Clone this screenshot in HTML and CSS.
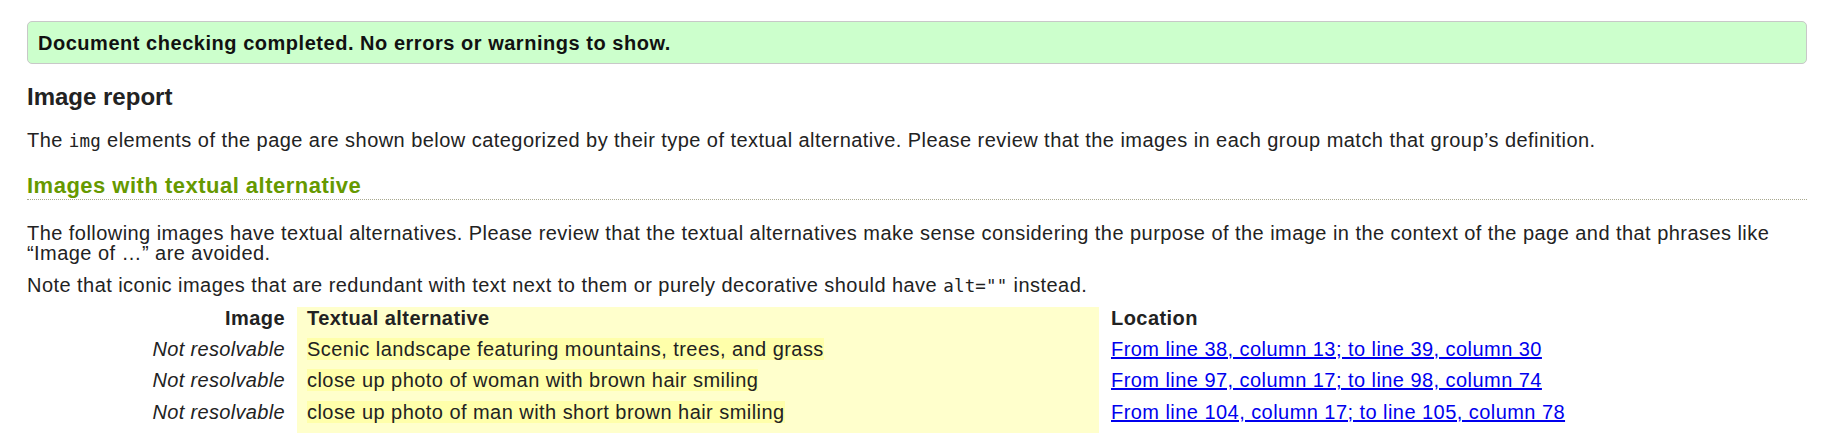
FILE: index.html
```html
<!DOCTYPE html>
<html lang="en">
<head>
<meta charset="utf-8">
<title>Image report</title>
<link rel="stylesheet" href="styles.css">
</head>
<body>
<div class="success">Document checking completed. No errors or warnings to show.</div>
<h2 class="report-title">Image report</h2>
<p class="intro">The <code>img</code> elements of the page are shown below categorized by their type of textual alternative. Please review that the images in each group match that group’s definition.</p>
<h3 class="group-title">Images with textual alternative</h3>
<p class="desc">The following images have textual alternatives. Please review that the textual alternatives make sense considering the purpose of the image in the context of the page and that phrases like “Image of …” are avoided.</p>
<p class="note">Note that iconic images that are redundant with text next to them or purely decorative should have <code>alt=""</code> instead.</p>
<table class="imagereview">
  <thead>
    <tr>
      <th class="img">Image</th>
      <th class="alt">Textual alternative</th>
      <th class="loc">Location</th>
    </tr>
  </thead>
  <tbody>
    <tr>
      <td class="img"><i>Not resolvable</i></td>
      <td class="alt"><span>Scenic landscape featuring mountains, trees, and grass</span></td>
      <td class="loc"><a href="#l38">From line 38, column 13; to line 39, column 30</a></td>
    </tr>
    <tr>
      <td class="img"><i>Not resolvable</i></td>
      <td class="alt"><span>close up photo of woman with brown hair smiling</span></td>
      <td class="loc"><a href="#l97">From line 97, column 17; to line 98, column 74</a></td>
    </tr>
    <tr class="last">
      <td class="img"><i>Not resolvable</i></td>
      <td class="alt"><span>close up photo of man with short brown hair smiling</span></td>
      <td class="loc"><a href="#l104">From line 104, column 17; to line 105, column 78</a></td>
    </tr>
  </tbody>
</table>
</body>
</html>
```
FILE: styles.css
```css
html {
  background: #fff;
}
body {
  margin: 0;
  padding: 21px 26px 0 27px;
  font-family: "Liberation Sans", Arial, sans-serif;
  font-size: 20px;
  line-height: 20px;
  letter-spacing: 0.45px;
  color: #222;
}
code {
  font-family: "DejaVu Sans Mono", monospace;
  font-size: 17.5px;
  letter-spacing: 0.2px;
}
.success {
  background: #ccffcc;
  border: 1px solid #c8c8c8;
  border-radius: 5px;
  padding: 11px 10px 9px;
  line-height: 21px;
  font-weight: bold;
  letter-spacing: 0.53px;
  color: #111;
}
.report-title {
  margin: 19px 0 0;
  font-size: 24px;
  line-height: 28px;
  font-weight: bold;
  letter-spacing: 0;
  color: #222;
}
.intro {
  margin: 19px 0 0;
}
.group-title {
  margin: 23px 0 0;
  font-size: 22px;
  line-height: 24px;
  font-weight: bold;
  letter-spacing: 0.49px;
  color: #669900;
  border-bottom: 1px dotted #a8a890;
  padding-bottom: 1px;
}
.desc {
  margin: 23px 0 0;
}
.note {
  margin: 12px 0 0;
}
.imagereview {
  margin: 11px 0 0 119px;
  border-collapse: collapse;
}
.imagereview th {
  font-weight: bold;
  text-align: left;
  padding-top: 1px;
  padding-bottom: 5px;
  color: #222;
  white-space: nowrap;
}
.imagereview td {
  padding-top: 5.5px;
  padding-bottom: 6px;
  white-space: nowrap;
}
.imagereview .last td {
  padding-bottom: 11px;
}
.imagereview .img {
  width: 139px;
  padding-left: 0;
  padding-right: 12px;
  text-align: right;
}
.imagereview td.img {
  letter-spacing: 0.33px;
}
.imagereview .alt {
  width: 782px;
  padding-left: 10px;
  padding-right: 10px;
  background: #ffffcc;
}
.imagereview .alt span {
  background: #ffffaa;
}
.imagereview .loc {
  padding-left: 12px;
  padding-right: 0;
}
.imagereview a {
  color: #0000ee;
}
```
